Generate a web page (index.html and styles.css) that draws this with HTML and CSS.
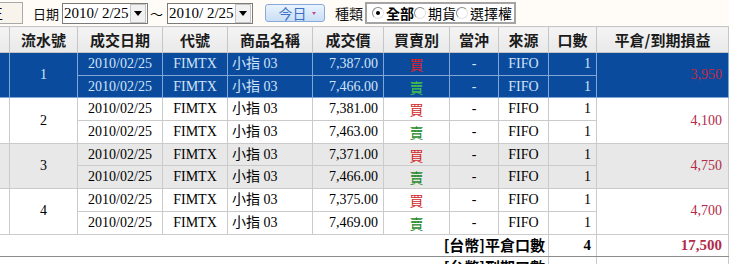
FILE: index.html
```html
<!DOCTYPE html>
<html lang="zh-Hant">
<head>
<meta charset="utf-8">
<link rel="stylesheet" href="styles.css">
</head>
<body>
<div class="toolbar">
  <div class="stub"><span>王</span></div>
  <span class="lbl date-lbl">日期</span>
  <div class="sel"><span class="val">2010/ 2/25</span><span class="dd"><i></i></span></div>
  <span class="tilde">～</span>
  <div class="sel"><span class="val">2010/ 2/25</span><span class="dd"><i></i></span></div>
  <button class="today">今日<span class="caret"></span></button>
  <span class="lbl kind-lbl">種類</span>
  <div class="radios">
    <span class="radio on"></span><span class="rl b">全部</span>
    <span class="radio"></span><span class="rl">期貨</span>
    <span class="radio"></span><span class="rl">選擇權</span>
  </div>
</div>
<table class="grid">
  <colgroup>
    <col class="w0"><col class="w1"><col class="w2"><col class="w3"><col class="w4"><col class="w5">
    <col class="w6"><col class="w7"><col class="w8"><col class="w9"><col class="w10"><col class="w11">
  </colgroup>
  <thead>
    <tr><th></th><th>流水號</th><th>成交日期</th><th>代號</th><th>商品名稱</th><th>成交價</th><th>買賣別</th><th>當沖</th><th>來源</th><th>口數</th><th>平倉/到期損益</th><th></th></tr>
  </thead>
  <tbody>
    <tr class="selrow"><td rowspan="2"></td><td rowspan="2" class="ctr">1</td><td class="ctr">2010/02/25</td><td class="ctr">FIMTX</td><td class="name">小指 03</td><td class="num">7,387.00</td><td class="ctr buy">買</td><td class="ctr">-</td><td class="ctr">FIFO</td><td class="num">1</td><td rowspan="2" class="num pl">3,950</td><td rowspan="2"></td></tr>
    <tr class="selrow"><td class="ctr">2010/02/25</td><td class="ctr">FIMTX</td><td class="name">小指 03</td><td class="num">7,466.00</td><td class="ctr sell">賣</td><td class="ctr">-</td><td class="ctr">FIFO</td><td class="num">1</td></tr>

    <tr><td rowspan="2"></td><td rowspan="2" class="ctr">2</td><td class="ctr">2010/02/25</td><td class="ctr">FIMTX</td><td class="name">小指 03</td><td class="num">7,381.00</td><td class="ctr buy">買</td><td class="ctr">-</td><td class="ctr">FIFO</td><td class="num">1</td><td rowspan="2" class="num pl">4,100</td><td rowspan="2"></td></tr>
    <tr><td class="ctr">2010/02/25</td><td class="ctr">FIMTX</td><td class="name">小指 03</td><td class="num">7,463.00</td><td class="ctr sell">賣</td><td class="ctr">-</td><td class="ctr">FIFO</td><td class="num">1</td></tr>

    <tr class="alt"><td rowspan="2"></td><td rowspan="2" class="ctr">3</td><td class="ctr">2010/02/25</td><td class="ctr">FIMTX</td><td class="name">小指 03</td><td class="num">7,371.00</td><td class="ctr buy">買</td><td class="ctr">-</td><td class="ctr">FIFO</td><td class="num">1</td><td rowspan="2" class="num pl">4,750</td><td rowspan="2"></td></tr>
    <tr class="alt"><td class="ctr">2010/02/25</td><td class="ctr">FIMTX</td><td class="name">小指 03</td><td class="num">7,466.00</td><td class="ctr sell">賣</td><td class="ctr">-</td><td class="ctr">FIFO</td><td class="num">1</td></tr>

    <tr><td rowspan="2"></td><td rowspan="2" class="ctr">4</td><td class="ctr">2010/02/25</td><td class="ctr">FIMTX</td><td class="name">小指 03</td><td class="num">7,375.00</td><td class="ctr buy">買</td><td class="ctr">-</td><td class="ctr">FIFO</td><td class="num">1</td><td rowspan="2" class="num pl">4,700</td><td rowspan="2"></td></tr>
    <tr><td class="ctr">2010/02/25</td><td class="ctr">FIMTX</td><td class="name">小指 03</td><td class="num">7,469.00</td><td class="ctr sell">賣</td><td class="ctr">-</td><td class="ctr">FIFO</td><td class="num">1</td></tr>

    <tr class="sum"><td colspan="9" class="sumlbl">[台幣]平倉口數</td><td class="num sumv">4</td><td class="num sumv pl">17,500</td><td></td></tr>
    <tr class="sum2"><td colspan="9" class="sumlbl">[台幣]到期口數</td><td class="num sumv"></td><td class="num sumv pl"></td><td></td></tr>
  </tbody>
</table>
</body>
</html>
```
FILE: styles.css
```css
html, body {
  margin: 0;
  padding: 0;
  background: #ffffff;
  overflow: hidden;
}
body {
  width: 729px;
  height: 264px;
  font-family: "Liberation Serif", "Noto Sans CJK TC", serif;
  color: #000;
}

/* ---------- toolbar ---------- */
.toolbar {
  height: 26px;
  display: flex;
  align-items: center;
  background: #fffcf7;
  font-family: "Noto Sans CJK TC", sans-serif;
  font-size: 14px;
  line-height: 1;
  white-space: nowrap;
}
.stub {
  width: 22px;
  height: 20px;
  margin-left: -1px;
  border: 1px solid #a9a9a9;
  background: #f8f4ec;
  overflow: hidden;
  display: flex;
  align-items: center;
}
.stub span {
  margin-left: -11px;
  font-size: 14px;
}
.lbl { color: #111; }
.date-lbl { margin-left: 10px; font-size: 13px; }
.kind-lbl { margin-left: 10px; }
.sel {
  width: 84px;
  height: 19px;
  margin-left: 3px;
  border: 1px solid #7b7b7b;
  background: #fff;
  display: flex;
  align-items: center;
  overflow: hidden;
}
.sel .val {
  font-family: "Liberation Serif", serif;
  font-size: 15px;
  padding-left: 1px;
  flex: 1;
  overflow: hidden;
  white-space: nowrap;
}
.sel .dd {
  width: 14px;
  height: 17px;
  margin-right: 1px;
  border: 1px solid #c4c4c4;
  background: #f1f1f1;
  display: flex;
  align-items: center;
  justify-content: center;
  flex: none;
}
.sel .dd i {
  width: 0;
  height: 0;
  border-left: 4px solid transparent;
  border-right: 4px solid transparent;
  border-top: 5px solid #000;
}
.tilde { margin-left: 2px; margin-right: 1px; font-size: 13px; }
.today {
  margin-left: 12px;
  width: 60px;
  height: 18px;
  padding: 0 0 0 4px;
  border: 1px solid #86abdb;
  border-radius: 3px;
  background: linear-gradient(#eaf3fd, #c9def5);
  color: #3b72c4;
  font-family: "Noto Sans CJK TC", sans-serif;
  font-size: 14px;
  line-height: 16px;
  display: flex;
  align-items: center;
  justify-content: center;
  gap: 5px;
}
.caret {
  width: 0;
  height: 0;
  border-left: 2.5px solid transparent;
  border-right: 2.5px solid transparent;
  border-top: 3px solid #c0508a;
}
.radios {
  margin-left: 2px;
  height: 18px;
  padding: 0 2px 0 5px;
  border: 2px solid #a4a4a4;
  background: #fff;
  display: flex;
  align-items: center;
  font-size: 14px;
}
.radio {
  width: 10px;
  height: 10px;
  border-radius: 50%;
  border: 1px solid;
  border-color: #8a8a8a #e2e2e2 #e2e2e2 #8a8a8a;
  background: #fff;
  margin-right: 2px;
  box-sizing: content-box;
  position: relative;
}
.radio.on::after {
  content: "";
  position: absolute;
  left: 3px;
  top: 3px;
  width: 4px;
  height: 4px;
  border-radius: 50%;
  background: #000;
}
.rl.b { font-weight: bold; }

/* ---------- grid ---------- */
.grid {
  border-collapse: collapse;
  table-layout: fixed;
  width: 760px;
  margin-left: -1px;
  font-size: 14px;
}
.w0 { width: 10px; }
.w1 { width: 68px; }
.w2 { width: 85px; }
.w3 { width: 65px; }
.w4 { width: 85px; }
.w5 { width: 71px; }
.w6 { width: 66px; }
.w7 { width: 49px; }
.w8 { width: 50px; }
.w9 { width: 48px; }
.w10 { width: 132px; }
.w11 { width: 31px; }

.grid th {
  height: 25px;
  padding: 0;
  border: 1px solid #c6c6c6;
  background: linear-gradient(#f4f4f4, #e9e9e9);
  font-family: "Noto Sans CJK TC", sans-serif;
  font-size: 15px;
  font-weight: bold;
  color: #1b1b1b;
  text-align: center;
  white-space: nowrap;
}
.grid td {
  height: 21.7px;
  padding: 0 4px;
  border: 1px solid #cbcbcb;
  white-space: nowrap;
  overflow: hidden;
  line-height: 16px;
}
.ctr { text-align: center; }
.num { text-align: right; }
.name { text-align: left; padding-left: 4px; }
.grid td.num { padding-right: 5px; }
.grid td.pl { padding-right: 6px; color: #b42a4a; }
.buy { color: #d42a2a; font-family: "Noto Sans CJK TC", sans-serif; }
.sell { color: #1f8a2a; font-family: "Noto Sans CJK TC", sans-serif; }

.selrow td {
  background: #0a4b9e;
  color: #d2e3f7;
  border-color: #7fa6d6;
}
.selrow td.buy { color: #e02222; }
.selrow td.sell { color: #42c24a; }
.selrow td.pl { color: #c8283c; }

.alt td { background: #e8e8e8; }

.sum td {
  height: 21px;
  border-bottom: 1px solid #8c8c8c;
}
.sumlbl {
  text-align: right;
  font-family: "Noto Sans CJK TC", sans-serif;
  font-size: 15px;
  font-weight: bold;
}
.grid td.sumlbl { padding-right: 3px; border-left-color: transparent; }
.sumv { font-weight: bold; font-size: 15px; }
.sum2 td { height: 21px; }
```
